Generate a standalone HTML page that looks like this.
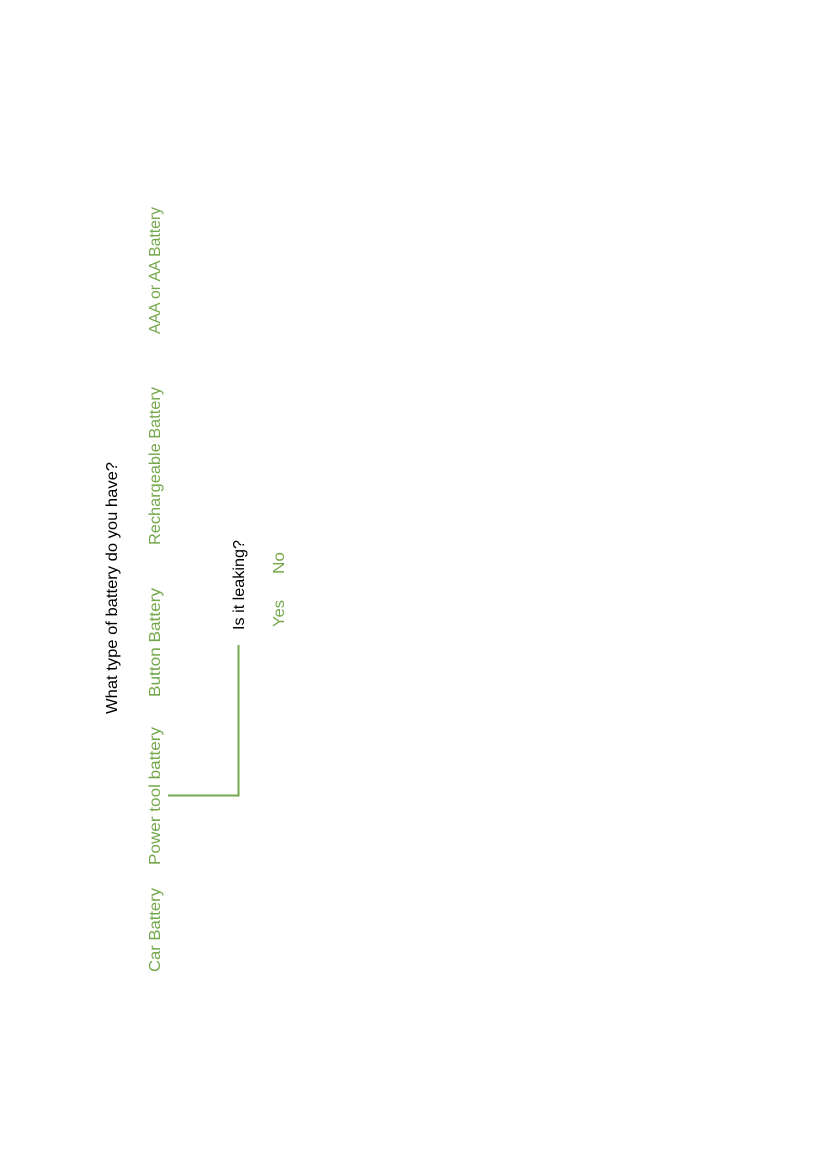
<!DOCTYPE html>
<html><head><style>html,body{margin:0;padding:0;background:#fff;width:826px;height:1169px;overflow:hidden}</style></head>
<body>
<svg width="826" height="1169" xmlns="http://www.w3.org/2000/svg" style="position:absolute;left:0;top:0" font-family="Liberation Sans, sans-serif" font-size="16">
<g fill="#000">
<text transform="translate(117,714) rotate(-90)" textLength="252" lengthAdjust="spacingAndGlyphs">What type of battery do you have?</text>
<text transform="translate(244,630) rotate(-90)" textLength="90" lengthAdjust="spacingAndGlyphs">Is it leaking?</text>
</g>
<g fill="#74a84b">
<text transform="translate(160,972) rotate(-90)" textLength="84" lengthAdjust="spacingAndGlyphs">Car Battery</text>
<text transform="translate(160,865) rotate(-90)" textLength="138" lengthAdjust="spacingAndGlyphs">Power tool battery</text>
<text transform="translate(160,697) rotate(-90)" textLength="109" lengthAdjust="spacingAndGlyphs">Button Battery</text>
<text transform="translate(160,545) rotate(-90)" textLength="158" lengthAdjust="spacingAndGlyphs">Rechargeable Battery</text>
<text transform="translate(160,334) rotate(-90)" textLength="127" lengthAdjust="spacingAndGlyphs">AAA or AA Battery</text>
<text transform="translate(284,627) rotate(-90)" textLength="27" lengthAdjust="spacingAndGlyphs">Yes</text>
<text transform="translate(284,574) rotate(-90)" textLength="22" lengthAdjust="spacingAndGlyphs">No</text>
</g>
<polyline points="168,795.5 238.5,795.5 238.5,645" fill="none" stroke="#74a84b" stroke-width="2"/>
</svg>
</body></html>
